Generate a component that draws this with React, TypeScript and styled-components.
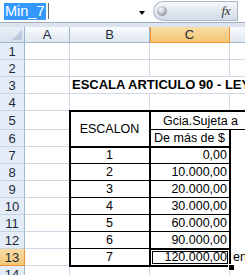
import React from 'react';
import styled, { createGlobalStyle, css } from 'styled-components';

const GRID = '#d0d7e5';
const HEAD_LINE = '#9eb6ce';
const SEL_LINE = '#f29536';

const GlobalStyle = createGlobalStyle`
  html, body { margin: 0; padding: 0; background: #fff; overflow: hidden; }
  body { font-family: "Liberation Sans", Arial, sans-serif; }
`;

const Window = styled.div`
  width: 245px;
  height: 275px;
  overflow: hidden;
  display: flex;
  flex-direction: column;
`;

/* ---------- formula bar ---------- */
const FormulaBar = styled.div`
  height: 22px;
  flex-shrink: 0;
  display: flex;
  background: #fff;
`;

const NameBox = styled.div`
  width: 150px;
  box-sizing: border-box;
  display: flex;
  align-items: flex-start;
  padding: 3px 0 0 4px;
`;

const NameText = styled.span`
  background: #3399ff;
  color: #fff;
  font-size: 14.5px;
  line-height: 17px;
  height: 17px;
  padding: 0 1px;
  white-space: nowrap;
`;

const Caret = styled.span`
  width: 1px;
  height: 16px;
  background: #666;
  margin-left: 2px;
`;

const DropArrow = styled.span`
  width: 0;
  height: 0;
  margin: 8px 5px 0 auto;
  border-left: 3.5px solid transparent;
  border-right: 3.5px solid transparent;
  border-top: 4px solid #000;
`;

const Pill = styled.div`
  margin: 1px 0 0 3px;
  width: 84px;
  height: 20px;
  box-sizing: border-box;
  border: 1px solid #aab6c6;
  border-right: none;
  border-radius: 10px 0 0 10px;
  background: linear-gradient(#f6f8fb, #dfe6ef 60%, #d2dbe7);
  display: flex;
  align-items: center;
  justify-content: space-between;
  padding: 0 7px 0 3px;
`;

const Ball = styled.span`
  width: 10px;
  height: 10px;
  border-radius: 50%;
  background: radial-gradient(circle at 40% 35%, #ffffff 0%, #c9ced4 35%, #8d959f 75%, #6f7781 100%);
`;

const Fx = styled.span`
  font-family: "Liberation Serif", "Times New Roman", serif;
  font-style: italic;
  font-size: 13px;
  color: #333;
  letter-spacing: -0.5px;
`;

const FormulaInput = styled.div`
  flex: 1;
  border-left: 1px solid #aab6c6;
  margin-top: 1px;
  height: 20px;
  box-sizing: border-box;
`;

const Band = styled.div`
  height: 5px;
  flex-shrink: 0;
  box-sizing: border-box;
  border-top: 1px solid #a4afbd;
  background: #dae3ee;
`;

/* ---------- sheet ---------- */
const Sheet = styled.div`
  display: grid;
  grid-template-columns: 25px 45px 80px 80px 80px;
  grid-template-rows: 16px repeat(4, 17px) 19px repeat(9, 17px);
  font-size: 12.5px;
  color: #000;
  background: #fff;
`;

const Corner = styled.div`
  box-sizing: border-box;
  background: linear-gradient(#e9eff7, #d6e0ec);
  border-right: 1px solid ${HEAD_LINE};
  border-bottom: 1px solid ${HEAD_LINE};
  display: flex;
  align-items: flex-end;
  justify-content: flex-end;
  padding: 0 2px 2px 0;
`;

const ColHead = styled.div<{ $sel?: boolean }>`
  box-sizing: border-box;
  display: flex;
  align-items: center;
  justify-content: center;
  font-size: 13px;
  color: #1e2b3c;
  background: ${(p) =>
    p.$sel ? 'linear-gradient(#f9dca6, #f3c673)' : 'linear-gradient(#f8fafd, #e0e8f1)'};
  border-right: 1px solid ${(p) => (p.$sel ? SEL_LINE : HEAD_LINE)};
  border-bottom: 1px solid ${(p) => (p.$sel ? SEL_LINE : HEAD_LINE)};
  ${(p) => p.$sel && css`box-shadow: inset 1px 0 0 ${SEL_LINE};`}
`;

const RowHead = styled.div<{ $sel?: boolean }>`
  box-sizing: border-box;
  display: flex;
  align-items: center;
  justify-content: center;
  font-size: 13px;
  color: #1e2b3c;
  background: ${(p) => (p.$sel ? 'linear-gradient(#f9dca6, #f3c673)' : '#e4ecf7')};
  border-right: 1px solid ${(p) => (p.$sel ? SEL_LINE : HEAD_LINE)};
  border-bottom: 1px solid ${(p) => (p.$sel ? SEL_LINE : '#c5d3e3')};
`;

type Edge = 0 | 1 | 2;

interface CellProps {
  $col?: string;
  $row?: string;
  $align?: 'left' | 'center' | 'right';
  $valign?: 'end' | 'center';
  $bold?: boolean;
  $noR?: boolean;
  $noB?: boolean;
  $fill?: boolean;
  $indent?: number;
  $t?: Edge;
  $r?: Edge;
  $b?: Edge;
  $l?: Edge;
  $active?: boolean;
}

const Cell = styled.div<CellProps>`
  box-sizing: border-box;
  min-width: 0;
  grid-column: ${(p) => p.$col || 'auto'};
  grid-row: ${(p) => p.$row || 'auto'};
  display: flex;
  align-items: ${(p) => (p.$valign === 'center' ? 'center' : 'flex-end')};
  justify-content: ${(p) =>
    p.$align === 'center' ? 'center' : p.$align === 'right' ? 'flex-end' : 'flex-start'};
  padding: 0 2px 0 ${(p) => (p.$indent ?? 2)}px;
  line-height: 16px;
  white-space: nowrap;
  font-weight: ${(p) => (p.$bold ? 700 : 400)};
  font-size: ${(p) => (p.$bold ? '13px' : 'inherit')};
  background: #fff;
  border-right: 1px solid ${(p) => (p.$noR ? (p.$fill ? '#fff' : 'transparent') : GRID)};
  border-bottom: 1px solid ${(p) => (p.$noB ? (p.$fill ? '#fff' : 'transparent') : GRID)};
  ${(p) =>
    (p.$t || p.$r || p.$b || p.$l || p.$active) &&
    css`
      position: relative;
      &::after {
        content: '';
        position: absolute;
        pointer-events: none;
        z-index: 1;
        top: -1px;
        left: -1px;
        right: ${p.$r === 2 ? -2 : -1}px;
        bottom: ${p.$b === 2 ? -2 : -1}px;
        border-style: solid;
        border-color: #000;
        border-width: ${p.$t || 0}px ${p.$r || 0}px ${p.$b || 0}px ${p.$l || 0}px;
      }
    `}
  ${(p) =>
    p.$active &&
    css`
      &::before {
        content: '';
        position: absolute;
        pointer-events: none;
        z-index: 2;
        top: -1px;
        left: -1px;
        right: -2px;
        bottom: -2px;
        border: 2px solid #000;
        box-shadow: inset 0 0 0 1px #fff, inset 0 0 0 2px #000;
      }
    `}
`;

const Text = styled.span`
  overflow: visible;
`;

const FillHandle = styled.span`
  position: absolute;
  z-index: 3;
  right: -6px;
  bottom: -6px;
  width: 5px;
  height: 5px;
  background: #000;
  border: 1px solid #fff;
`;

const ClipText = styled.span`
  overflow: hidden;
`;

const rowsData = [
  { n: '1', v: '0,00' },
  { n: '2', v: '10.000,00' },
  { n: '3', v: '20.000,00' },
  { n: '4', v: '30.000,00' },
  { n: '5', v: '60.000,00' },
  { n: '6', v: '90.000,00' },
  { n: '7', v: '120.000,00' },
];

const EmptyRow: React.FC<{ n: string }> = ({ n }) => (
  <>
    <RowHead>{n}</RowHead>
    <Cell />
    <Cell />
    <Cell />
    <Cell />
  </>
);

export default function App() {
  return (
    <Window>
      <GlobalStyle />
      <FormulaBar>
        <NameBox>
          <NameText>Min_7</NameText>
          <Caret />
          <DropArrow />
        </NameBox>
        <Pill>
          <Ball />
          <Fx>fx</Fx>
        </Pill>
        <FormulaInput />
      </FormulaBar>
      <Band />
      <Sheet>
        <Corner>
          <svg width="10" height="10" viewBox="0 0 10 10">
            <polygon points="10,0 10,10 0,10" fill="#b9c9dd" />
          </svg>
        </Corner>
        <ColHead>A</ColHead>
        <ColHead>B</ColHead>
        <ColHead $sel>C</ColHead>
        <ColHead />

        <EmptyRow n="1" />
        <EmptyRow n="2" />

        <RowHead>3</RowHead>
        <Cell />
        <Cell $col="3 / 6" $bold $indent={2}>
          <Text>ESCALA ARTICULO 90 - LEY</Text>
        </Cell>

        <EmptyRow n="4" />

        <RowHead>5</RowHead>
        <Cell />
        <Cell $row="6 / 8" $col="3" $align="center" $valign="center" $t={2} $l={2} $r={2} $b={2}>
          ESCALON
        </Cell>
        <Cell $col="4 / 6" $indent={13} $noR $t={2} $b={1}>
          <Text>Gcia.Sujeta a</Text>
        </Cell>

        <RowHead>6</RowHead>
        <Cell />
        <Cell $align="center" $r={2} $b={2}>
          De más de $
        </Cell>
        <Cell $fill $noR $noB />

        {rowsData.map((r, i) => {
          const last = i === rowsData.length - 1;
          return (
            <React.Fragment key={r.n}>
              <RowHead $sel={last}>{7 + i}</RowHead>
              <Cell />
              <Cell $align="center" $l={2} $r={2} $b={last ? 2 : 1}>
                {r.n}
              </Cell>
              <Cell $align="right" $r={2} $b={last ? 2 : 1} $active={last}>
                {r.v}
                {last && <FillHandle />}
              </Cell>
              <Cell $fill $noR $noB $indent={3}>
                {last && <ClipText>en</ClipText>}
              </Cell>
            </React.Fragment>
          );
        })}

        <EmptyRow n="14" />
      </Sheet>
    </Window>
  );
}
